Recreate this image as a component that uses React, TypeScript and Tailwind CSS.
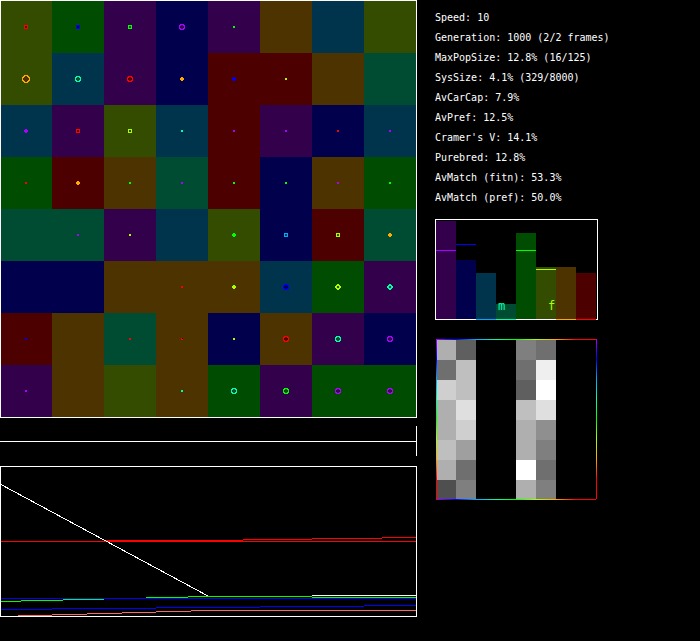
import * as React from "react";

type Hue = "V" | "B" | "A" | "T" | "G" | "L" | "O" | "R";
type Shape = "dot" | "blob" | "box" | "diamond" | "ring" | "bigRing" | "chip";

const BRIGHT: Record<Hue, string> = {
  V: "#aa00ff",
  B: "#0000ff",
  A: "#00aaff",
  T: "#00ffaa",
  G: "#00ff00",
  L: "#aaff00",
  O: "#ffaa00",
  R: "#ff0000",
};

const DARK: Record<Hue, string> = {
  V: "#33004c",
  B: "#00004c",
  A: "#00334c",
  T: "#004c33",
  G: "#004c00",
  L: "#334c00",
  O: "#4c3300",
  R: "#4c0000",
};

const HUES: Hue[] = ["V", "B", "A", "T", "G", "L", "O", "R"];

// "#" is the bright outline, "o" the dark inside
const SHAPES: Record<Shape, string[]> = {
  dot: ["##", "##"],
  chip: ["#o", "##"],
  blob: [".##.", "####", "####", ".##."],
  box: ["####", "#oo#", "#oo#", "####"],
  diamond: ["..##..", ".####.", "##oo##", "##oo##", ".####.", "..##.."],
  ring: [".####.", "##oo##", "#oooo#", "#oooo#", "##oo##", ".####."],
  bigRing: [
    "..####..",
    ".##oo##.",
    "##oooo##",
    "#oooooo#",
    "#oooooo#",
    "##oooo##",
    ".##oo##.",
    "..####..",
  ],
};

const TERRAIN = [
  "LGVBVOAL",
  "LAVBRROT",
  "AVLARVBA",
  "GROTRBOG",
  "TTVALBRT",
  "BBOOOAGV",
  "ROTOBOVB",
  "VOLOGVGG",
];

const AGENTS: Record<string, [Hue, Shape]> = {
  "0,0": ["R", "box"],
  "1,0": ["B", "box"],
  "2,0": ["G", "box"],
  "3,0": ["V", "ring"],
  "4,0": ["G", "dot"],
  "0,1": ["O", "bigRing"],
  "1,1": ["T", "ring"],
  "2,1": ["R", "ring"],
  "3,1": ["O", "blob"],
  "4,1": ["B", "blob"],
  "5,1": ["L", "dot"],
  "0,2": ["V", "blob"],
  "1,2": ["R", "box"],
  "2,2": ["L", "box"],
  "3,2": ["T", "dot"],
  "4,2": ["V", "dot"],
  "5,2": ["V", "dot"],
  "6,2": ["R", "dot"],
  "7,2": ["V", "dot"],
  "0,3": ["R", "dot"],
  "1,3": ["O", "blob"],
  "2,3": ["G", "dot"],
  "3,3": ["V", "dot"],
  "4,3": ["G", "dot"],
  "5,3": ["G", "dot"],
  "6,3": ["V", "dot"],
  "7,3": ["G", "dot"],
  "1,4": ["V", "dot"],
  "2,4": ["L", "dot"],
  "4,4": ["G", "blob"],
  "5,4": ["A", "box"],
  "6,4": ["L", "box"],
  "7,4": ["O", "blob"],
  "3,5": ["R", "dot"],
  "4,5": ["L", "blob"],
  "5,5": ["B", "ring"],
  "6,5": ["L", "diamond"],
  "7,5": ["T", "diamond"],
  "0,6": ["B", "dot"],
  "2,6": ["R", "dot"],
  "3,6": ["R", "chip"],
  "4,6": ["L", "dot"],
  "5,6": ["R", "ring"],
  "6,6": ["T", "ring"],
  "7,6": ["V", "ring"],
  "0,7": ["V", "dot"],
  "3,7": ["T", "dot"],
  "4,7": ["T", "ring"],
  "5,7": ["G", "ring"],
  "6,7": ["V", "ring"],
  "7,7": ["V", "ring"],
};

const STATS: [string, string][] = [
  ["Speed", "10"],
  ["Generation", "1000 (2/2 frames)"],
  ["MaxPopSize", "12.8% (16/125)"],
  ["SysSize", "4.1% (329/8000)"],
  ["AvCarCap", "7.9%"],
  ["AvPref", "12.5%"],
  ["Cramer's V", "14.1%"],
  ["Purebred", "12.8%"],
  ["AvMatch (fitn)", "53.3%"],
  ["AvMatch (pref)", "50.0%"],
];

// bar height and preference level, both counted up from the axis
const BARS: { hue: Hue; height: number; level: number }[] = [
  { hue: "V", height: 98, level: 69 },
  { hue: "B", height: 59, level: 75 },
  { hue: "A", height: 46, level: 0 },
  { hue: "T", height: 15, level: 0 },
  { hue: "G", height: 86, level: 69 },
  { hue: "L", height: 52, level: 50 },
  { hue: "O", height: 52, level: 0 },
  { hue: "R", height: 46, level: 0 },
];

const MATRIX: Record<number, string[]> = {
  0: ["#afafaf", "#6f6f6f", "#cfcfcf", "#afafaf", "#afafaf", "#bfbfbf", "#afafaf", "#4f4f4f"],
  1: ["#5f5f5f", "#bfbfbf", "#bfbfbf", "#dfdfdf", "#cfcfcf", "#9f9f9f", "#6f6f6f", "#7f7f7f"],
  4: ["#7f7f7f", "#6f6f6f", "#5f5f5f", "#bfbfbf", "#afafaf", "#afafaf", "#ffffff", "#afafaf"],
  5: ["#6f6f6f", "#efefef", "#ffffff", "#dfdfdf", "#8f8f8f", "#7f7f7f", "#6f6f6f", "#7f7f7f"],
};

// each step is [from, to, y]
const SERIES: { color: string; steps: [number, number, number][] }[] = [
  {
    color: "#ff0000",
    steps: [
      [1, 416, 75],
      [104, 243, 74],
      [243, 312, 73],
      [312, 382, 72],
      [382, 416, 71],
    ],
  },
  {
    color: "#00ff00",
    steps: [
      [1, 21, 135],
      [21, 63, 134],
      [63, 104, 133],
      [146, 188, 131],
      [188, 312, 130],
      [312, 416, 131],
    ],
  },
  {
    color: "#0000ff",
    steps: [
      [1, 416, 132],
      [1, 52, 143],
      [52, 156, 142],
      [156, 260, 141],
      [260, 364, 140],
      [364, 416, 139],
    ],
  },
  {
    color: "#ff6666",
    steps: [
      [18, 52, 149],
      [52, 87, 148],
      [87, 122, 147],
      [122, 156, 146],
      [156, 191, 145],
      [191, 416, 144],
    ],
  },
  { color: "#ffffff", steps: [[312, 416, 129]] },
];

function Agent({ hue, shape }: { hue: Hue; shape: Shape }) {
  const rows = SHAPES[shape];
  const pad = (10 - rows.length) / 2;
  return (
    <svg viewBox="0 0 10 10" className="size-[10px]" shapeRendering="crispEdges">
      {rows.map((row, y) =>
        row.split("").map((c, x) =>
          c === "." ? null : (
            <rect
              key={`${x},${y}`}
              x={x + pad}
              y={y + pad}
              width={1}
              height={1}
              fill={c === "#" ? BRIGHT[hue] : DARK[hue]}
            />
          )
        )
      )}
    </svg>
  );
}

function World() {
  return (
    <div className="grid grid-cols-[51fr_repeat(7,52fr)] auto-rows-[52px] border border-white">
      {TERRAIN.map((row, y) =>
        row.split("").map((c, x) => {
          const agent = AGENTS[`${x},${y}`];
          return (
            <div
              key={`${x},${y}`}
              className="flex items-center justify-end pr-[21px]"
              style={{ backgroundColor: DARK[c as Hue] }}
            >
              {agent && <Agent hue={agent[0]} shape={agent[1]} />}
            </div>
          );
        })
      )}
    </div>
  );
}

function Timeline() {
  return (
    <div className="flex h-[30px] items-center border-r border-white">
      <div className="mt-px h-px w-full bg-white" />
    </div>
  );
}

function History() {
  return (
    <svg
      viewBox="0 0 417 151"
      preserveAspectRatio="none"
      className="block h-[151px] w-full"
      shapeRendering="crispEdges"
    >
      {SERIES.map((s) =>
        s.steps.map(([from, to, y]) => (
          <rect key={`${from},${y}`} x={from} y={y} width={to - from} height={1} fill={s.color} />
        ))
      )}
      <line x1={0} y1={18} x2={208} y2={130} stroke="#ffffff" />
      <rect x={0.5} y={0.5} width={416} height={150} fill="none" stroke="#ffffff" />
    </svg>
  );
}

function Stats() {
  return (
    <dl className="font-['DejaVu_Sans_Mono',monospace] text-[10px] leading-5">
      {STATS.map(([name, value]) => (
        <div key={name} className="flex gap-[6px] whitespace-nowrap">
          <dt>{name}:</dt>
          <dd>{value}</dd>
        </div>
      ))}
    </dl>
  );
}

function PreferenceChart() {
  return (
    <svg viewBox="0 0 163 101" className="block h-[101px] w-[163px]" shapeRendering="crispEdges">
      <rect x={0.5} y={0.5} width={162} height={100} fill="none" stroke="#ffffff" />
      {BARS.map((b, i) => (
        <g key={b.hue}>
          <rect x={1 + i * 20} y={100 - b.height} width={20} height={b.height} fill={DARK[b.hue]} />
          <rect x={1 + i * 20} y={100 - b.level} width={20} height={1} fill={BRIGHT[b.hue]} />
        </g>
      ))}
      <g className="font-['DejaVu_Sans_Mono',monospace] text-[12px]">
        <text x={63} y={91} fill={BRIGHT.T}>
          m
        </text>
        <text x={113} y={91} fill={BRIGHT.L}>
          f
        </text>
      </g>
    </svg>
  );
}

function MatchMatrix() {
  const stops = HUES.map((h, i) => <stop key={h} offset={i / 8} stopColor={BRIGHT[h]} />);
  return (
    <svg viewBox="0 0 161 161" className="ml-px block size-[161px]" shapeRendering="crispEdges">
      <defs>
        <linearGradient id="across" gradientUnits="userSpaceOnUse" x1={0} y1={0} x2={160} y2={0}>
          {stops}
        </linearGradient>
        <linearGradient id="down" gradientUnits="userSpaceOnUse" x1={0} y1={0} x2={0} y2={160}>
          {stops}
        </linearGradient>
      </defs>
      {Object.entries(MATRIX).map(([col, shades]) =>
        shades.map((shade, row) => (
          <rect
            key={`${col},${row}`}
            x={Number(col) * 20}
            y={1 + row * 20}
            width={20}
            height={20}
            fill={shade}
          />
        ))
      )}
      <rect x={0} y={0} width={160} height={1} fill="url(#across)" />
      <rect x={0} y={160} width={160} height={1} fill="url(#across)" />
      <rect x={0} y={0} width={1} height={161} fill="url(#down)" />
      <rect x={160} y={0} width={1} height={160} fill="url(#down)" />
    </svg>
  );
}

export default function App() {
  return (
    <main className="grid min-h-screen grid-cols-[417fr_283fr] items-start bg-black text-white">
      <div className="flex flex-col">
        <World />
        <div className="pt-2 pb-[10px]">
          <Timeline />
        </div>
        <History />
      </div>
      <div className="flex flex-col pt-2 pl-[18px]">
        <Stats />
        <div className="flex flex-col gap-[19px] pt-[11px]">
          <PreferenceChart />
          <MatchMatrix />
        </div>
      </div>
    </main>
  );
}
